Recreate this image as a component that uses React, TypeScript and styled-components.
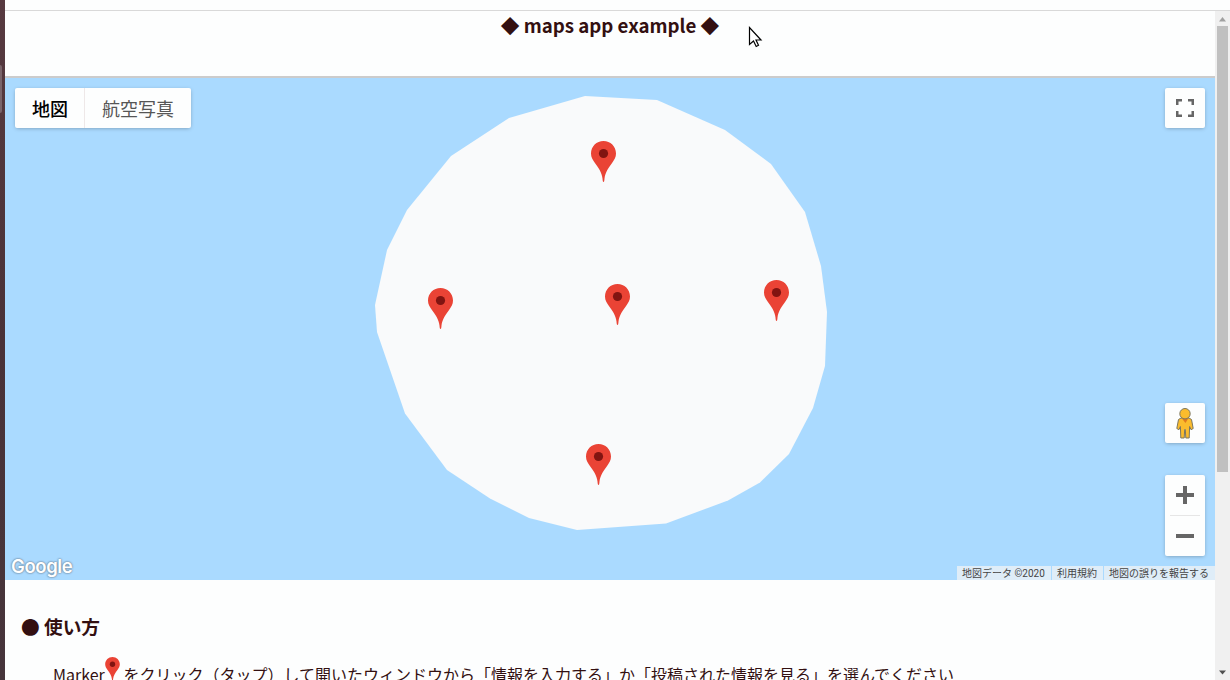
import React from 'react';
import styled, { createGlobalStyle } from 'styled-components';

const GlobalStyle = createGlobalStyle`
  * { box-sizing: border-box; }
  body {
    margin: 0;
    overflow: hidden;
    background: #fdfefe;
    color: #331011;
    font-family: "Noto Sans CJK JP", sans-serif;
  }
`;

const Screen = styled.div`
  position: relative;
  display: grid;
  grid-template-columns: 5px 1fr;
  width: 1230px;
  height: 680px;
  overflow: hidden;
`;

const DesktopEdge = styled.div`
  padding-top: 65px;
  background: linear-gradient(#573a40, #4a3238 50%, #46353b);
`;

const EdgeHandle = styled.div`
  width: 2px;
  height: 48px;
  border-radius: 0 2px 2px 0;
  background: #7a646a;
`;

const Browser = styled.div`
  display: flex;
  flex-direction: column;
  min-width: 0;
  height: 680px;
`;

const Chrome = styled.div`
  flex: none;
  height: 11px;
  border-bottom: 1px solid #d9d9d9;
`;

const Viewport = styled.div`
  display: flex;
  flex: 1;
  min-height: 0;
`;

const Page = styled.main`
  flex: 1;
  min-width: 0;
  overflow: hidden;
`;

const Header = styled.header`
  height: 67px;
  border-bottom: 2px solid #cccccc;
`;

const Title = styled.h1`
  margin: 0;
  font-size: 18.72px;
  line-height: 28px;
  font-weight: 700;
  text-align: center;
`;

const MapArea = styled.section`
  position: relative;
  height: 502px;
  background: #aadaff;
`;

const Island = styled.svg`
  display: block;
`;

const Overlay = styled.div`
  position: absolute;
  inset: 0;
  display: flex;
  justify-content: space-between;
  padding: 10px 10px 0;
`;

const Side = styled.div<{ $end?: boolean }>`
  display: flex;
  flex-direction: column;
  align-items: ${p => (p.$end ? 'flex-end' : 'flex-start')};
`;

const Card = styled.div<{ $gap?: number }>`
  display: flex;
  align-items: center;
  justify-content: center;
  width: 40px;
  height: 40px;
  margin-top: ${p => p.$gap ?? 0}px;
  border-radius: 2px;
  background: #fdfefe;
  box-shadow: 0 1px 4px -1px rgba(0, 0, 0, 0.35);
`;

const MapTypes = styled(Card)`
  width: 176px;
  justify-content: stretch;
`;

const MapType = styled.div<{ $active?: boolean }>`
  width: ${p => (p.$active ? '70px' : '106px')};
  height: 40px;
  padding-left: 17px;
  border-right: ${p => (p.$active ? '1px solid #eee8e8' : '0')};
  font-size: 18px;
  line-height: 40px;
  font-weight: ${p => (p.$active ? 500 : 400)};
  color: ${p => (p.$active ? '#000' : '#565656')};
  white-space: nowrap;
`;

const ZoomCard = styled(Card)`
  flex-direction: column;
  height: 81px;
`;

const ZoomButton = styled.div`
  display: flex;
  align-items: center;
  justify-content: center;
  width: 40px;
  height: 40px;
`;

const Divider = styled.div`
  width: 30px;
  height: 1px;
  background: #e6e6e6;
`;

const Brand = styled.div`
  position: absolute;
  left: 6px;
  bottom: 1px;
  font-family: Inter, sans-serif;
  font-size: 18.5px;
  line-height: 26px;
  font-weight: 600;
  letter-spacing: -0.4px;
  color: #fff;
  text-shadow: 0 0 2px #667c90, 0 0 2px #7890a5;
`;

const Credits = styled.div`
  position: absolute;
  right: 0;
  bottom: 0;
  display: flex;
  gap: 1px;
  height: 14px;
  font-family: Roboto, "Noto Sans CJK JP", sans-serif;
  font-size: 10px;
  line-height: 16px;
  color: #444;
  white-space: nowrap;
`;

const Credit = styled.span<{ $width: number }>`
  width: ${p => p.$width}px;
  padding-left: 5px;
  background: #dfedf8;
`;

const Guide = styled.section`
  padding: 31px 0 0 16px;
`;

const GuideTitle = styled.h2`
  margin: 0;
  font-size: 18.72px;
  line-height: 30px;
  font-weight: 700;
`;

const GuideText = styled.p`
  display: flex;
  margin: 16px 0 0 32px;
  font-size: 16px;
  line-height: 34px;
  white-space: nowrap;
`;

const InlinePin = styled.span`
  width: 15px;
  height: 24px;
  margin: 0 3.6px 0 0;
  line-height: 0;
`;

const Scrollbar = styled.div`
  display: flex;
  flex-direction: column;
  align-items: center;
  width: 15px;
  background: #f0f0f0;
`;

const ScrollButton = styled.div`
  height: 15px;
  line-height: 0;
`;

const Thumb = styled.div`
  width: 11px;
  height: 446px;
  margin-bottom: auto;
  background: #c0c0c0;
`;

const Pointer = styled.svg`
  position: absolute;
  left: 748px;
  top: 26px;
`;

const PinShape = () => (
  <>
    <path
      fill="#ea4335"
      d="M12.5 0C5.6 0 0 5.5 0 12.4C0 16.2 1.7 18.8 4.1 22.2C7.5 27 10.8 31.3 11.5 37.5Q11.7 41 12.5 41Q13.3 41 13.5 37.5C14.2 31.3 17.5 27 20.9 22.2C23.3 18.8 25 16.2 25 12.4C25 5.5 19.4 0 12.5 0Z"
    />
    <circle cx="12.5" cy="12.5" r="4.6" fill="#811411" />
  </>
);

const pins = [
  [591, 141],
  [428, 288],
  [605, 284],
  [764, 280],
  [586, 444],
];

const coast =
  '585,96 657,100 725,130 771,164 805,212 821,266 827,312 825,366 813,408 789,454 760,482.5 728,500.5 666,523.5 577,530 529,518 490,498.5 447,470 405,413.5 377,332 375,305 387,250 407,210 451,156 509,118';

export default function App() {
  return (
    <>
      <GlobalStyle />
      <Screen>
        <DesktopEdge>
          <EdgeHandle />
        </DesktopEdge>
        <Browser>
          <Chrome />
          <Viewport>
            <Page>
              <Header>
                <Title>◆ maps app example ◆</Title>
              </Header>
              <MapArea>
                <Island width="1210" height="502" viewBox="5 78 1210 502">
                  <polygon points={coast} fill="#f9fafb" />
                  {pins.map(([x, y]) => (
                    <g key={x} transform={`translate(${x} ${y})`}>
                      <PinShape />
                    </g>
                  ))}
                </Island>
                <Overlay>
                  <Side>
                    <MapTypes>
                      <MapType $active>地図</MapType>
                      <MapType>航空写真</MapType>
                    </MapTypes>
                  </Side>
                  <Side $end>
                    <Card>
                      <svg width="18" height="18" viewBox="0 0 18 18" fill="#666">
                        <path d="M0 0h6v2.5H2.5V6H0zM12 0h6v6h-2.5V2.5H12zM0 12h2.5v3.5H6V18H0zM15.5 12H18v6h-6v-2.5h3.5z" />
                      </svg>
                    </Card>
                    <Card $gap={275}>
                      <svg width="19" height="32" viewBox="0 -0.5 19 32">
                        <path
                          d="M5 10.5L2.5 12 .8 21l2.2 1.2L4.4 19l.4 11.5h3.4L8.7 22h.6l.5 8.5h3.4L13.6 19l1.4 3.2L17.2 21l-1.7-9L13 10.5z"
                          fill="#fbbc2d"
                          stroke="#7b765f"
                        />
                        <path d="M5.5 10.5h7L9.5 15.5z" fill="#e07a1f" />
                        <circle cx="9" cy="6.2" r="5.2" fill="#fbbc2d" stroke="#7b765f" />
                      </svg>
                    </Card>
                    <ZoomCard $gap={32}>
                      <ZoomButton>
                        <svg width="18" height="18" viewBox="0 0 18 18" fill="#666">
                          <path d="M7 0h4v7h7v4h-7v7H7v-7H0V7h7z" />
                        </svg>
                      </ZoomButton>
                      <Divider />
                      <ZoomButton>
                        <svg width="18" height="4" fill="#666">
                          <path d="M0 0h18v4H0z" />
                        </svg>
                      </ZoomButton>
                    </ZoomCard>
                  </Side>
                </Overlay>
                <Brand>Google</Brand>
                <Credits>
                  <Credit $width={94}>地図データ ©2020</Credit>
                  <Credit $width={51}>利用規約</Credit>
                  <Credit $width={111}>地図の誤りを報告する</Credit>
                </Credits>
              </MapArea>
              <Guide>
                <GuideTitle>● 使い方</GuideTitle>
                <GuideText>
                  <span>Marker</span>
                  <InlinePin>
                    <svg width="15" height="24" viewBox="0 0 25 41">
                      <PinShape />
                    </svg>
                  </InlinePin>
                  <span>をクリック（タップ）して開いたウィンドウから「情報を入力する」か「投稿された情報を見る」を選んでください</span>
                </GuideText>
              </Guide>
            </Page>
            <Scrollbar>
              <ScrollButton>
                <svg width="15" height="15">
                  <path d="M4 10.5h7L7.5 6z" fill="#a0a0a0" />
                </svg>
              </ScrollButton>
              <Thumb />
              <ScrollButton>
                <svg width="15" height="15">
                  <path d="M4 5.5h7L7.5 9.5z" fill="#505050" />
                </svg>
              </ScrollButton>
            </Scrollbar>
          </Viewport>
        </Browser>
        <Pointer width="16" height="22" viewBox="0 0 16 22">
          <path
            d="M1.5 1.5V18.5L5.5 15L8.2 20.5L10.5 19.3L8 14H13z"
            fill="#fff"
            stroke="#000"
            strokeWidth="1.2"
          />
        </Pointer>
      </Screen>
    </>
  );
}
